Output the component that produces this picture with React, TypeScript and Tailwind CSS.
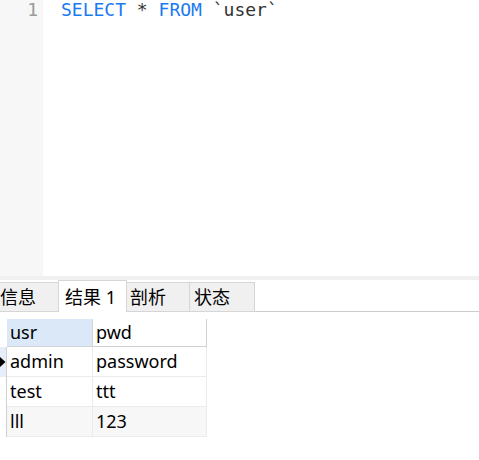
import React from "react";

const cjk = { fontFamily: '"Noto Sans", "Noto Sans CJK SC", sans-serif' };
const mono = { fontFamily: '"DejaVu Sans Mono", "Liberation Mono", monospace' };

export default function App() {
  const rows = [
    { a: "admin", b: "password", sel: true, alt: false },
    { a: "test", b: "ttt", sel: false, alt: false },
    { a: "lll", b: "123", sel: false, alt: true },
  ];
  return (
    <div className="w-[479px] h-[460px] bg-white overflow-hidden" style={cjk}>
      {/* editor */}
      <div className="flex h-[276px]">
        <div
          className="w-[43px] bg-[#f7f7f7] text-right pr-[5px] text-[18px] leading-[20px] text-[#999999]"
          style={mono}
        >
          1
        </div>
        <div className="pl-[18px] text-[18px] leading-[20px] whitespace-pre" style={mono}>
          <span className="text-[#1a7af0]">SELECT</span>
          <span className="text-[#333333]"> * </span>
          <span className="text-[#1a7af0]">FROM</span>
          <span className="text-[#333333]"> `user`</span>
        </div>
      </div>
      <div className="h-[4px] bg-[#f0f0f0]" />
      {/* tabs */}
      <div className="flex items-end h-[32px] text-[18px] text-black">
        <div className="w-[58px] h-[30px] flex items-center bg-[#f0f0f0] border-t border-b border-[#d6d6d6] leading-none">
          信息
        </div>
        <div className="w-[69px] h-[32px] flex items-center pl-[6px] bg-white border-t border-l border-r border-[#d6d6d6] leading-none">
          结果 1
        </div>
        <div className="w-[63px] h-[30px] flex items-center pl-[3px] bg-[#f0f0f0] border-t border-r border-b border-[#d6d6d6] leading-none">
          剖析
        </div>
        <div className="w-[65px] h-[30px] flex items-center pl-[4px] bg-[#f0f0f0] border-t border-r border-b border-[#d6d6d6] leading-none">
          状态
        </div>
        <div className="flex-1 h-[32px] border-b border-[#cccccc]" />
      </div>
      {/* table */}
      <div className="mt-[7px] grid grid-cols-[7px_86px_114px] text-[18px] text-black">
        <div className="h-[28px] bg-white" />
        <div className="h-[28px] flex items-center pl-[3px] bg-[#dae8f7] border-r border-b border-[#d4d4d4]">
          usr
        </div>
        <div className="h-[28px] flex items-center pl-[3px] bg-white border-r border-b border-[#d0d0d0]">
          pwd
        </div>
        {rows.map((r) => (
          <React.Fragment key={r.a}>
            <div
              className={`h-[30px] relative border-r border-[#d0d0d0] ${
                r.sel ? "bg-[#e6eff9]" : "bg-white"
              }`}
            >
              {r.sel && (
                <svg
                  className="absolute left-0 top-[10px]"
                  width="6"
                  height="10"
                  viewBox="0 0 6 10"
                >
                  <path d="M0 0 L5.5 5 L0 10 Z" fill="#000" />
                </svg>
              )}
            </div>
            <div
              className={`h-[30px] flex items-center pl-[3px] pb-[1px] border-r border-b border-[#ebebeb] ${
                r.alt ? "bg-[#f7f7f7]" : "bg-white"
              }`}
            >
              {r.a}
            </div>
            <div
              className={`h-[30px] flex items-center pl-[3px] pb-[1px] border-r border-b border-[#ebebeb] ${
                r.alt ? "bg-[#f7f7f7]" : "bg-white"
              }`}
            >
              {r.b}
            </div>
          </React.Fragment>
        ))}
      </div>
    </div>
  );
}
